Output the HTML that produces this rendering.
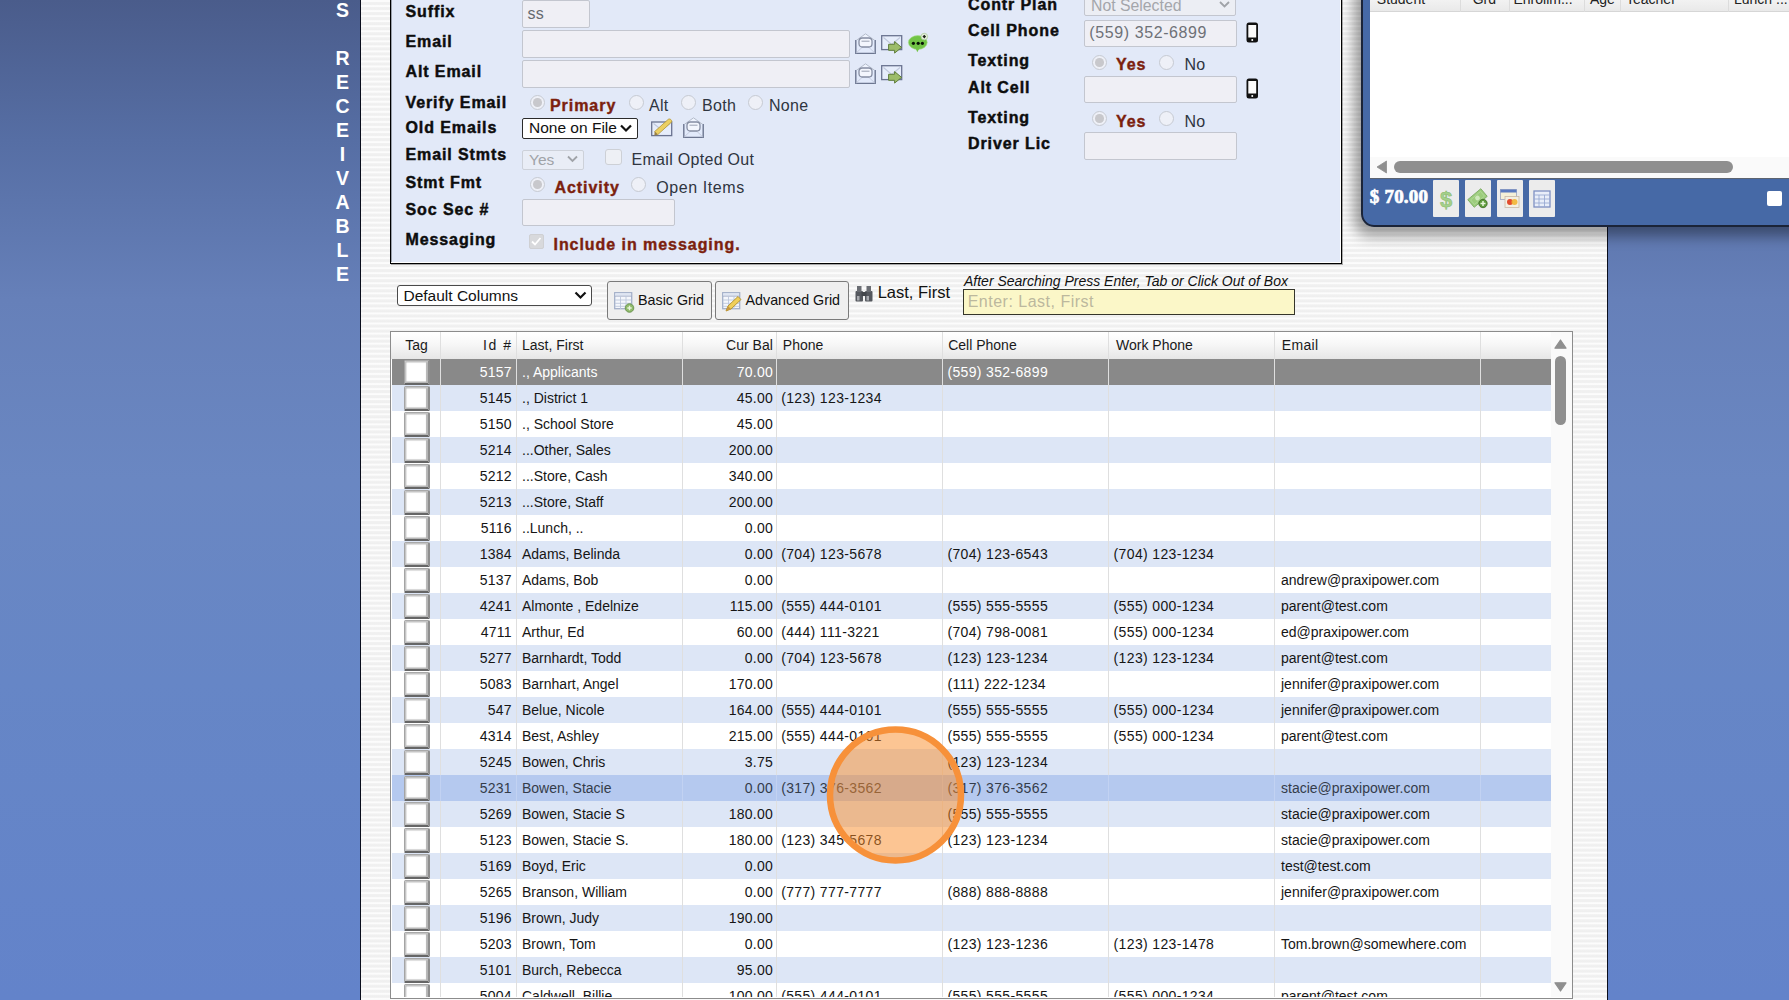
<!DOCTYPE html>
<html><head><meta charset="utf-8"><title>Accounts Receivable</title>
<style>
html,body{margin:0;padding:0;}
body{width:1789px;height:1000px;overflow:hidden;position:relative;font-family:"Liberation Sans", sans-serif;
 background:linear-gradient(180deg,#4a5c8b 0px,#566ea4 140px,#6680b9 300px,#6a87c2 480px,#6686c6 680px,#6383ca 1000px);}
.a{position:absolute;box-sizing:border-box;}
.t{position:absolute;white-space:nowrap;}
.stripes{background:repeating-linear-gradient(180deg,#f6f6f6 0px,#fcfcfc 0.6px,#fcfcfc 1.4px,#f1f1f1 2.4px,#efefef 4.3px,#f6f6f6 5.04px);}
.inp{position:absolute;box-sizing:border-box;background:#efeff5;border:1px solid #c3c6cf;border-radius:2px;}
.radio{position:absolute;box-sizing:border-box;width:15px;height:15px;border-radius:50%;border:1px solid #c6cad2;background:#eef0f7;}
.radio.on::after{content:"";position:absolute;left:2.2px;top:2.2px;width:8.6px;height:8.6px;border-radius:50%;background:#c8c8cc;}
</style></head><body>

<div class="t" style="left:142.50px;width:400px;text-align:center;top:1.09px;font-size:19.5px;line-height:19.5px;font-weight:bold;color:#fff;">S</div>
<div class="t" style="left:142.50px;width:400px;text-align:center;top:48.99px;font-size:19.5px;line-height:19.5px;font-weight:bold;color:#fff;">R</div>
<div class="t" style="left:142.50px;width:400px;text-align:center;top:72.94px;font-size:19.5px;line-height:19.5px;font-weight:bold;color:#fff;">E</div>
<div class="t" style="left:142.50px;width:400px;text-align:center;top:96.89px;font-size:19.5px;line-height:19.5px;font-weight:bold;color:#fff;">C</div>
<div class="t" style="left:142.50px;width:400px;text-align:center;top:120.84px;font-size:19.5px;line-height:19.5px;font-weight:bold;color:#fff;">E</div>
<div class="t" style="left:142.50px;width:400px;text-align:center;top:144.79px;font-size:19.5px;line-height:19.5px;font-weight:bold;color:#fff;">I</div>
<div class="t" style="left:142.50px;width:400px;text-align:center;top:168.74px;font-size:19.5px;line-height:19.5px;font-weight:bold;color:#fff;">V</div>
<div class="t" style="left:142.50px;width:400px;text-align:center;top:192.69px;font-size:19.5px;line-height:19.5px;font-weight:bold;color:#fff;">A</div>
<div class="t" style="left:142.50px;width:400px;text-align:center;top:216.64px;font-size:19.5px;line-height:19.5px;font-weight:bold;color:#fff;">B</div>
<div class="t" style="left:142.50px;width:400px;text-align:center;top:240.59px;font-size:19.5px;line-height:19.5px;font-weight:bold;color:#fff;">L</div>
<div class="t" style="left:142.50px;width:400px;text-align:center;top:264.54px;font-size:19.5px;line-height:19.5px;font-weight:bold;color:#fff;">E</div>
<div class="a" style="left:360px;top:0px;width:1px;height:1000px;background:#0a0e1c;"></div>
<div class="a stripes" style="left:361px;top:0px;width:1246px;height:1000px;"></div>
<div class="a" style="left:1607px;top:0px;width:1px;height:1000px;background:#0a0e1c;"></div>
<div class="a" style="left:390px;top:-10px;width:952px;height:274px;background:#e2e9f8;border:1px solid #000;box-shadow:inset -1px -1px 0 #fff, inset 1px 0 0 #9aa0ab, 1px 1px 0 rgba(0,0,0,0.3);"></div>
<div class="t" style="left:405.50px;top:3.96px;font-size:16px;line-height:16px;font-weight:bold;color:#0d0d0d;letter-spacing:0.9px;-webkit-text-stroke:0.45px #0d0d0d;">Suffix</div>
<div class="t" style="left:405.50px;top:33.96px;font-size:16px;line-height:16px;font-weight:bold;color:#0d0d0d;letter-spacing:0.9px;-webkit-text-stroke:0.45px #0d0d0d;">Email</div>
<div class="t" style="left:405.50px;top:63.96px;font-size:16px;line-height:16px;font-weight:bold;color:#0d0d0d;letter-spacing:0.9px;-webkit-text-stroke:0.45px #0d0d0d;">Alt Email</div>
<div class="t" style="left:405.50px;top:94.96px;font-size:16px;line-height:16px;font-weight:bold;color:#0d0d0d;letter-spacing:0.9px;-webkit-text-stroke:0.45px #0d0d0d;">Verify Email</div>
<div class="t" style="left:405.50px;top:120.46px;font-size:16px;line-height:16px;font-weight:bold;color:#0d0d0d;letter-spacing:0.9px;-webkit-text-stroke:0.45px #0d0d0d;">Old Emails</div>
<div class="t" style="left:405.50px;top:147.16px;font-size:16px;line-height:16px;font-weight:bold;color:#0d0d0d;letter-spacing:0.9px;-webkit-text-stroke:0.45px #0d0d0d;">Email Stmts</div>
<div class="t" style="left:405.50px;top:174.96px;font-size:16px;line-height:16px;font-weight:bold;color:#0d0d0d;letter-spacing:0.9px;-webkit-text-stroke:0.45px #0d0d0d;">Stmt Fmt</div>
<div class="t" style="left:405.50px;top:202.16px;font-size:16px;line-height:16px;font-weight:bold;color:#0d0d0d;letter-spacing:0.9px;-webkit-text-stroke:0.45px #0d0d0d;">Soc Sec #</div>
<div class="t" style="left:405.50px;top:231.96px;font-size:16px;line-height:16px;font-weight:bold;color:#0d0d0d;letter-spacing:0.9px;-webkit-text-stroke:0.45px #0d0d0d;">Messaging</div>
<div class="t" style="left:968.00px;top:-2.64px;font-size:16px;line-height:16px;font-weight:bold;color:#0d0d0d;letter-spacing:0.9px;-webkit-text-stroke:0.45px #0d0d0d;">Contr Plan</div>
<div class="t" style="left:968.00px;top:22.96px;font-size:16px;line-height:16px;font-weight:bold;color:#0d0d0d;letter-spacing:0.9px;-webkit-text-stroke:0.45px #0d0d0d;">Cell Phone</div>
<div class="t" style="left:968.00px;top:52.86px;font-size:16px;line-height:16px;font-weight:bold;color:#0d0d0d;letter-spacing:0.9px;-webkit-text-stroke:0.45px #0d0d0d;">Texting</div>
<div class="t" style="left:968.00px;top:79.86px;font-size:16px;line-height:16px;font-weight:bold;color:#0d0d0d;letter-spacing:0.9px;-webkit-text-stroke:0.45px #0d0d0d;">Alt Cell</div>
<div class="t" style="left:968.00px;top:109.86px;font-size:16px;line-height:16px;font-weight:bold;color:#0d0d0d;letter-spacing:0.9px;-webkit-text-stroke:0.45px #0d0d0d;">Texting</div>
<div class="t" style="left:968.00px;top:135.76px;font-size:16px;line-height:16px;font-weight:bold;color:#0d0d0d;letter-spacing:0.9px;-webkit-text-stroke:0.45px #0d0d0d;">Driver Lic</div>
<div class="inp" style="left:522px;top:0px;width:68px;height:28px;"></div>
<div class="t" style="left:527.50px;top:5.86px;font-size:16px;line-height:16px;color:#666a70;letter-spacing:0.3px;">ss</div>
<div class="inp" style="left:522px;top:30px;width:328px;height:28px;"></div>
<div class="inp" style="left:522px;top:60px;width:328px;height:28px;"></div>
<div class="inp" style="left:522px;top:199px;width:153px;height:27px;"></div>
<div class="inp" style="left:1084px;top:-12px;width:152px;height:28px;background:#eceef4;"></div>
<div class="t" style="left:1091.00px;top:-2.17px;font-size:15.8px;line-height:15.8px;color:#a4a6ab;">Not Selected</div>
<div class="inp" style="left:1084px;top:19.5px;width:153px;height:27.5px;"></div>
<div class="t" style="left:1089.30px;top:24.66px;font-size:16px;line-height:16px;color:#6e7177;letter-spacing:0.6px;">(559) 352-6899</div>
<div class="inp" style="left:1084px;top:76px;width:153px;height:27px;"></div>
<div class="inp" style="left:1084px;top:132px;width:153px;height:27.5px;"></div>
<div class="radio on" style="left:530.0px;top:95.1px;"></div>
<div class="t" style="left:550.00px;top:97.86px;font-size:16px;line-height:16px;font-weight:bold;color:#7c1f0e;letter-spacing:0.95px;-webkit-text-stroke:0.4px #7c1f0e;">Primary</div>
<div class="radio" style="left:628.7px;top:95.1px;"></div>
<div class="t" style="left:649.00px;top:97.86px;font-size:16px;line-height:16px;color:#2f3540;letter-spacing:0.3px;">Alt</div>
<div class="radio" style="left:681.0px;top:95.1px;"></div>
<div class="t" style="left:702.00px;top:97.86px;font-size:16px;line-height:16px;color:#2f3540;letter-spacing:0.3px;">Both</div>
<div class="radio" style="left:747.7px;top:95.1px;"></div>
<div class="t" style="left:769.00px;top:97.86px;font-size:16px;line-height:16px;color:#2f3540;letter-spacing:0.3px;">None</div>
<div class="radio on" style="left:530.0px;top:176.8px;"></div>
<div class="t" style="left:554.40px;top:180.06px;font-size:16px;line-height:16px;font-weight:bold;color:#7c1f0e;letter-spacing:0.95px;-webkit-text-stroke:0.4px #7c1f0e;">Activity</div>
<div class="radio" style="left:630.7px;top:176.8px;"></div>
<div class="t" style="left:656.20px;top:179.86px;font-size:16px;line-height:16px;color:#2f3540;letter-spacing:0.6px;">Open Items</div>
<div class="radio on" style="left:1092.0px;top:54.8px;"></div>
<div class="t" style="left:1116.00px;top:56.56px;font-size:16px;line-height:16px;font-weight:bold;color:#7c1f0e;letter-spacing:0.95px;-webkit-text-stroke:0.4px #7c1f0e;">Yes</div>
<div class="radio" style="left:1158.8px;top:54.8px;"></div>
<div class="t" style="left:1184.50px;top:56.56px;font-size:16px;line-height:16px;color:#2f3540;letter-spacing:0.3px;">No</div>
<div class="radio on" style="left:1092.0px;top:111.0px;"></div>
<div class="t" style="left:1116.00px;top:113.56px;font-size:16px;line-height:16px;font-weight:bold;color:#7c1f0e;letter-spacing:0.95px;-webkit-text-stroke:0.4px #7c1f0e;">Yes</div>
<div class="radio" style="left:1158.8px;top:111.0px;"></div>
<div class="t" style="left:1184.50px;top:113.56px;font-size:16px;line-height:16px;color:#2f3540;letter-spacing:0.3px;">No</div>
<div class="a" style="left:522px;top:118px;width:116px;height:21px;background:#fff;border:1px solid #2b2b2b;border-radius:2px;"></div>
<div class="t" style="left:529.00px;top:120.48px;font-size:15.5px;line-height:15.5px;color:#111;">None on File</div>
<svg class="a" style="left:619px;top:123px;" width="14" height="10" viewBox="0 0 14 10"><path d="M2 2.5 L7 7.5 L12 2.5" fill="none" stroke="#111" stroke-width="2.2"/></svg>
<div class="a" style="left:522px;top:149.5px;width:62px;height:20px;background:#e9edf6;border:1px solid #cdd1d9;border-radius:2px;"></div>
<div class="t" style="left:529.00px;top:151.68px;font-size:15.5px;line-height:15.5px;color:#a0a3a8;">Yes</div>
<svg class="a" style="left:566px;top:154px;" width="13" height="10" viewBox="0 0 13 10"><path d="M2 2.5 L6.5 7 L11 2.5" fill="none" stroke="#a0a3a8" stroke-width="1.8"/></svg>
<svg class="a" style="left:1218px;top:0px;" width="13" height="10" viewBox="0 0 13 10"><path d="M2 2 L6.5 6.5 L11 2" fill="none" stroke="#a0a3a8" stroke-width="1.8"/></svg>
<div class="a" style="left:605px;top:148.5px;width:16.5px;height:16.5px;background:#eef0f5;border:1px solid #cdd0d6;border-radius:3px;"></div>
<div class="t" style="left:631.50px;top:151.66px;font-size:16px;line-height:16px;color:#2f3540;letter-spacing:0.3px;">Email Opted Out</div>
<div class="a" style="left:528.5px;top:234px;width:15px;height:15px;background:#d8d9dc;border:1px solid #cfd0d3;border-radius:2px;"></div>
<svg class="a" style="left:530px;top:236px;" width="12" height="11" viewBox="0 0 12 11"><path d="M2 5.5 L5 8.5 L10.5 2" fill="none" stroke="#fff" stroke-width="1.8"/></svg>
<div class="t" style="left:553.50px;top:237.06px;font-size:16px;line-height:16px;font-weight:bold;color:#7c1f0e;letter-spacing:0.95px;-webkit-text-stroke:0.4px #7c1f0e;">Include in messaging.</div>
<svg class="a" style="left:855px;top:33px;overflow:visible" width="21" height="21" viewBox="0 0 21 21"><path d="M1.2 7.5 L10.5 0.8 L19.8 7.5 Z" fill="#eef3fd" stroke="#b5bdcc" stroke-width="1"/><path d="M0.8 7 L0.8 20.4 L20.2 20.4 L20.2 7" fill="#e2eafb" stroke="#6c7690" stroke-width="1.4"/><path d="M1.2 20 L8.5 13 M19.8 20 L12.5 13" fill="none" stroke="#c3cadb" stroke-width="0.9"/><rect x="4" y="5" width="13" height="9" rx="3.2" fill="#f3f6fd" stroke="#858da2" stroke-width="1.3"/><path d="M6.5 8.2 H14.5" stroke="#8e96aa" stroke-width="0.9"/></svg>
<svg class="a" style="left:881px;top:35px;overflow:visible" width="22" height="20" viewBox="0 0 22 20"><rect x="0.7" y="0.7" width="20" height="13.9" fill="#e6edfb" stroke="#6a7390" stroke-width="1.3"/><path d="M2.5 2.5 L10.7 9.5 L19 2.5" fill="none" stroke="#c0c8dc" stroke-width="1.1"/><path d="M7.6 9.3 L13.6 9.3 L13.6 6.6 L20.6 12.4 L13.6 18.1 L13.6 15.3 L7.6 15.3 Z" fill="#9dbd6b" stroke="#5f7d3b" stroke-width="1" stroke-linejoin="round"/></svg>
<svg class="a" style="left:908px;top:33px;overflow:visible" width="21" height="21" viewBox="0 0 21 21"><ellipse cx="9.8" cy="9.5" rx="9.4" ry="6.9" fill="#72c446" stroke="#a5de86" stroke-width="0.6"/><path d="M7.5 15 L9.3 19.3 L11.6 15 Z" fill="#72c446"/><circle cx="5.4" cy="10.3" r="1.6" fill="#071204"/><circle cx="10.2" cy="10.3" r="1.6" fill="#071204"/><circle cx="14.4" cy="10.3" r="1.6" fill="#071204"/><circle cx="16.3" cy="3.6" r="3.3" fill="#e9f0e0" stroke="#a9c99a" stroke-width="0.8"/><path d="M16.3 1.8 L18.1 3.6 L16.3 5.4 L14.5 3.6 Z" fill="#1b2318"/></svg>
<svg class="a" style="left:855px;top:63px;overflow:visible" width="21" height="21" viewBox="0 0 21 21"><path d="M1.2 7.5 L10.5 0.8 L19.8 7.5 Z" fill="#eef3fd" stroke="#b5bdcc" stroke-width="1"/><path d="M0.8 7 L0.8 20.4 L20.2 20.4 L20.2 7" fill="#e2eafb" stroke="#6c7690" stroke-width="1.4"/><path d="M1.2 20 L8.5 13 M19.8 20 L12.5 13" fill="none" stroke="#c3cadb" stroke-width="0.9"/><rect x="4" y="5" width="13" height="9" rx="3.2" fill="#f3f6fd" stroke="#858da2" stroke-width="1.3"/><path d="M6.5 8.2 H14.5" stroke="#8e96aa" stroke-width="0.9"/></svg>
<svg class="a" style="left:881px;top:65px;overflow:visible" width="22" height="20" viewBox="0 0 22 20"><rect x="0.7" y="0.7" width="20" height="13.9" fill="#e6edfb" stroke="#6a7390" stroke-width="1.3"/><path d="M2.5 2.5 L10.7 9.5 L19 2.5" fill="none" stroke="#c0c8dc" stroke-width="1.1"/><path d="M7.6 9.3 L13.6 9.3 L13.6 6.6 L20.6 12.4 L13.6 18.1 L13.6 15.3 L7.6 15.3 Z" fill="#9dbd6b" stroke="#5f7d3b" stroke-width="1" stroke-linejoin="round"/></svg>
<svg class="a" style="left:651px;top:117.5px;overflow:visible" width="21" height="19" viewBox="0 0 21 19"><rect x="0.7" y="4" width="20" height="13.6" fill="#e6edfb" stroke="#6a7390" stroke-width="1.3"/><path d="M2.5 5.5 L10.7 12 L19 5.5" fill="none" stroke="#c0c8dc" stroke-width="1.1"/><path d="M3.6 13.6 L17.2 1.4 C18.8 0 21.6 2.4 20.4 4.2 L6.8 16.6 Z" fill="#ebcf62" stroke="#b39434" stroke-width="0.8"/><path d="M3.6 13.6 L6.8 16.6 L3.4 17.8 Z" fill="#9a8040"/></svg>
<svg class="a" style="left:683px;top:117px;overflow:visible" width="21" height="21" viewBox="0 0 21 21"><path d="M1.2 7.5 L10.5 0.8 L19.8 7.5 Z" fill="#eef3fd" stroke="#b5bdcc" stroke-width="1"/><path d="M0.8 7 L0.8 20.4 L20.2 20.4 L20.2 7" fill="#e2eafb" stroke="#6c7690" stroke-width="1.4"/><path d="M1.2 20 L8.5 13 M19.8 20 L12.5 13" fill="none" stroke="#c3cadb" stroke-width="0.9"/><rect x="4" y="5" width="13" height="9" rx="3.2" fill="#f3f6fd" stroke="#858da2" stroke-width="1.3"/><path d="M6.5 8.2 H14.5" stroke="#8e96aa" stroke-width="0.9"/></svg>
<svg class="a" style="left:1246px;top:22px;overflow:visible" width="13" height="21" viewBox="0 0 13 21"><rect x="0.5" y="0.5" width="11.5" height="20" rx="2.5" fill="#111"/><rect x="2.3" y="3" width="7.9" height="12.5" fill="#fafafa"/><circle cx="6.25" cy="18" r="1" fill="#fff"/></svg>
<svg class="a" style="left:1246px;top:78px;overflow:visible" width="13" height="21" viewBox="0 0 13 21"><rect x="0.5" y="0.5" width="11.5" height="20" rx="2.5" fill="#111"/><rect x="2.3" y="3" width="7.9" height="12.5" fill="#fafafa"/><circle cx="6.25" cy="18" r="1" fill="#fff"/></svg>
<div class="a" style="left:1361px;top:-20px;width:460px;height:247px;border-radius:0 0 0 13px;box-shadow:-4px 6px 14px 3px rgba(0,0,0,0.38);"></div>
<div class="a" style="left:1361px;top:-20px;width:460px;height:247px;background:#4669a6;border:2px solid #1b2438;border-radius:0 0 0 13px;"></div>
<div class="a" style="left:1370px;top:-20px;width:440px;height:198px;background:#fff;"></div>
<div class="a" style="left:1370px;top:-20px;width:440px;height:32px;background:linear-gradient(180deg,#fbfbfb 0%,#f3f3f3 60%,#e9e9e9 100%);border-bottom:1px solid #d6d6d6;"></div>
<div class="a" style="left:1459.5px;top:-20px;width:1px;height:32px;background:#dcdcdc;"></div>
<div class="a" style="left:1508.5px;top:-20px;width:1px;height:32px;background:#dcdcdc;"></div>
<div class="a" style="left:1584px;top:-20px;width:1px;height:32px;background:#dcdcdc;"></div>
<div class="a" style="left:1620px;top:-20px;width:1px;height:32px;background:#dcdcdc;"></div>
<div class="a" style="left:1728px;top:-20px;width:1px;height:32px;background:#dcdcdc;"></div>
<div class="t" style="left:1376.80px;top:-8.35px;font-size:14px;line-height:14px;color:#222;">Student</div>
<div class="t" style="left:1472.70px;top:-8.35px;font-size:14px;line-height:14px;color:#222;">Grd</div>
<div class="t" style="left:1513.50px;top:-8.35px;font-size:14px;line-height:14px;color:#222;">Enrollm...</div>
<div class="t" style="left:1590.00px;top:-8.35px;font-size:14px;line-height:14px;color:#222;">Age</div>
<div class="t" style="left:1626.00px;top:-8.35px;font-size:14px;line-height:14px;color:#222;">Teacher</div>
<div class="t" style="left:1734.00px;top:-8.35px;font-size:14px;line-height:14px;color:#222;">Lunch ...</div>
<div class="a" style="left:1370px;top:157px;width:440px;height:21px;background:#fafafa;"></div>
<svg class="a" style="left:1377px;top:161px;overflow:visible" width="10" height="12" viewBox="0 0 10 12"><path d="M9.5 0 L9.5 12 L0 6 Z" fill="#8f8f8f" stroke="#8f8f8f" stroke-width="0.8" stroke-linejoin="round"/></svg>
<div class="a" style="left:1393.5px;top:161px;width:339px;height:12px;background:#8f8f8f;border-radius:6px;"></div>
<div class="a" style="left:1370px;top:177.5px;width:440px;height:1.5px;background:#5d6470;"></div>
<div class="t" style="left:1369.80px;top:186.52px;font-size:19px;line-height:19px;font-weight:bold;color:#fff;letter-spacing:0.2px;font-family:'Liberation Serif', serif;-webkit-text-stroke:0.7px #fff;">$ 70.00</div>
<div class="a" style="left:1433px;top:180px;width:26px;height:36.5px;background:#ececec;border-radius:1px;"></div>
<div class="a" style="left:1465px;top:180px;width:26px;height:36.5px;background:#ececec;border-radius:1px;"></div>
<div class="a" style="left:1497px;top:180px;width:26px;height:36.5px;background:#ececec;border-radius:1px;"></div>
<div class="a" style="left:1529px;top:180px;width:26px;height:36.5px;background:#ececec;border-radius:1px;"></div>
<svg class="a" style="left:1439px;top:188px;overflow:visible" width="14" height="22" viewBox="0 0 14 22"><text x="7" y="19" text-anchor="middle" font-family="Liberation Sans" font-weight="bold" font-size="22" fill="#a4d08a" stroke="#86b86c" stroke-width="0.5">$</text></svg>
<svg class="a" style="left:1468px;top:188px;overflow:visible" width="21" height="21" viewBox="0 0 21 21"><g transform="rotate(-40 9.5 10)"><rect x="1" y="5" width="17" height="10" fill="#9ccc7c" stroke="#78a85e" stroke-width="0.8"/><circle cx="9.5" cy="10" r="2.4" fill="#cfe8bc"/><rect x="3" y="7" width="13" height="6" fill="none" stroke="#b9dca3" stroke-width="0.6"/></g><circle cx="15" cy="15.5" r="4.2" fill="#5e9a3c" stroke="#3e6a26" stroke-width="0.8"/><path d="M15 13 V18 M12.5 15.5 H17.5" stroke="#e8f5dc" stroke-width="1.5"/></svg>
<svg class="a" style="left:1500px;top:189px;overflow:visible" width="20" height="20" viewBox="0 0 20 20"><rect x="0.5" y="0.5" width="16" height="10" fill="#f5f0d8" stroke="#9aa4c0" stroke-width="0.8"/><rect x="0.5" y="0.5" width="16" height="3" fill="#5a79c0"/><rect x="5" y="7.5" width="14" height="11" fill="#f4efe2" stroke="#c9b9a6" stroke-width="0.8"/><circle cx="10" cy="13" r="3" fill="#e24b2e"/><circle cx="14.5" cy="13" r="3" fill="#f2b535" opacity="0.9"/></svg>
<svg class="a" style="left:1533px;top:190px;overflow:visible" width="18" height="18" viewBox="0 0 18 18"><rect x="1" y="1" width="16" height="16" fill="#e9eef9" stroke="#7e90c2" stroke-width="1.3"/><path d="M1 5 H17 M1 9 H17 M1 13 H17 M6 5 V17 M11.5 5 V17" stroke="#9aaad2" stroke-width="0.9"/></svg>
<div class="a" style="left:1767px;top:191px;width:15px;height:15px;background:#fff;border-radius:2px;"></div>
<div class="a" style="left:397px;top:285px;width:195px;height:21px;background:#fff;border:1px solid #4a4a4a;border-radius:3px;"></div>
<div class="t" style="left:403.50px;top:287.78px;font-size:15.5px;line-height:15.5px;color:#111;">Default Columns</div>
<svg class="a" style="left:573px;top:290px;overflow:visible" width="15" height="11" viewBox="0 0 15 11"><path d="M2.5 2.5 L7.5 7.5 L12.5 2.5" fill="none" stroke="#111" stroke-width="2.2"/></svg>
<div class="a" style="left:607px;top:281px;width:105px;height:38.5px;background:#efefef;border:1px solid #7a7a7a;border-radius:3px;"></div>
<div class="a" style="left:715px;top:281px;width:134px;height:38.5px;background:#efefef;border:1px solid #7a7a7a;border-radius:3px;"></div>
<svg class="a" style="left:614px;top:292px;overflow:visible" width="21" height="20" viewBox="0 0 21 20"><rect x="0.7" y="0.7" width="17" height="16" fill="#f5f7fc" stroke="#a3afc8" stroke-width="1.3"/><rect x="1.3" y="1.3" width="15.8" height="2.6" fill="#dfe5f2"/><path d="M1 4.2 H17.5" stroke="#9aa6c0" stroke-width="0.8"/><path d="M1 8 H17.5 M1 11.3 H17.5 M1 14.3 H17.5 M6.5 4.2 V17 M12 4.2 V17" stroke="#bcc6db" stroke-width="0.9"/><circle cx="15.5" cy="16" r="4.3" fill="#8fba6a" stroke="#5f8a45" stroke-width="0.8"/><path d="M15.5 13.8 V18.2 M13.3 16 H17.7" stroke="#e9f5dc" stroke-width="1.4"/></svg>
<svg class="a" style="left:722px;top:292px;overflow:visible" width="21" height="20" viewBox="0 0 21 20"><rect x="0.7" y="0.7" width="17" height="16" fill="#f5f7fc" stroke="#a3afc8" stroke-width="1.3"/><rect x="1.3" y="1.3" width="15.8" height="2.6" fill="#dfe5f2"/><path d="M1 4.2 H17.5" stroke="#9aa6c0" stroke-width="0.8"/><path d="M1 8 H17.5 M1 11.3 H17.5 M1 14.3 H17.5 M6.5 4.2 V17 M12 4.2 V17" stroke="#bcc6db" stroke-width="0.9"/><path d="M4 19 L6 14 L16 4.5 L19 7.5 L9 17 Z" fill="#f0cf5a" stroke="#b08f2a" stroke-width="0.9"/><path d="M4 19 L6 14 L9 17 Z" fill="#c9973f"/></svg>
<div class="t" style="left:638.00px;top:292.80px;font-size:14.3px;line-height:14.3px;color:#111;">Basic Grid</div>
<div class="t" style="left:745.50px;top:292.80px;font-size:14.3px;line-height:14.3px;color:#111;">Advanced Grid</div>
<svg class="a" style="left:855px;top:285px;overflow:visible" width="18" height="17" viewBox="0 0 18 17"><rect x="0.5" y="6" width="7.5" height="10.5" rx="1" fill="#55585e"/><rect x="10" y="6" width="7.5" height="10.5" rx="1" fill="#55585e"/><rect x="2" y="1" width="4.5" height="6" fill="#6a6d73"/><rect x="11.5" y="1" width="4.5" height="6" fill="#6a6d73"/><rect x="6.5" y="7" width="5" height="4" fill="#44474c"/><rect x="2" y="11" width="2.5" height="4.5" fill="#a9abb0"/><rect x="11.5" y="11" width="2.5" height="4.5" fill="#a9abb0"/></svg>
<div class="t" style="left:877.70px;top:283.73px;font-size:16.5px;line-height:16.5px;color:#111;">Last, First</div>
<div class="t" style="left:964.00px;top:273.80px;font-size:14px;line-height:14px;font-style:italic;color:#111;">After Searching Press Enter, Tab or Click Out of Box</div>
<div class="a" style="left:963px;top:289px;width:332px;height:25.5px;background:#fbf7c8;border:1.5px solid #35352a;"></div>
<div class="t" style="left:967.70px;top:294.06px;font-size:16px;line-height:16px;color:#bcb89e;letter-spacing:0.5px;">Enter: Last, First</div>
<div class="a" style="left:390px;top:331px;width:1183px;height:668px;background:#fff;border:1px solid #8c8c8c;"></div>
<div class="a" style="left:391px;top:332px;width:1181px;height:665px;overflow:hidden;"><div class="a" style="left:-391px;top:-332px;width:1789px;height:1000px;">
<div class="a" style="left:391px;top:332px;width:1160px;height:27px;background:linear-gradient(180deg,#ffffff 0%,#f7f7f7 45%,#e6e6e6 100%);"></div>
<div class="a" style="left:392px;top:359px;width:1159px;height:26px;background:#898989;"></div>
<div class="t" style="left:111.80px;width:400px;text-align:right;top:365.35px;font-size:14px;line-height:14px;color:#fff;letter-spacing:0.25px;">5157</div>
<div class="t" style="left:522.00px;top:365.35px;font-size:14px;line-height:14px;color:#fff;">., Applicants</div>
<div class="t" style="left:373.00px;width:400px;text-align:right;top:365.35px;font-size:14px;line-height:14px;color:#fff;letter-spacing:0.25px;">70.00</div>
<div class="t" style="left:781.20px;top:365.35px;font-size:14px;line-height:14px;color:#fff;letter-spacing:0.35px;"></div>
<div class="t" style="left:947.40px;top:365.35px;font-size:14px;line-height:14px;color:#fff;letter-spacing:0.35px;">(559) 352-6899</div>
<div class="t" style="left:1113.60px;top:365.35px;font-size:14px;line-height:14px;color:#fff;letter-spacing:0.35px;"></div>
<div class="t" style="left:1281.00px;top:365.35px;font-size:14px;line-height:14px;color:#fff;"></div>
<div class="a" style="left:404px;top:360.3px;width:26px;height:24.5px;background:#fff;border-style:solid;border-width:1.6px 2px 2.4px 1.6px;border-color:#a9a9a9 #8e8e8e #666666 #a4a4a4;border-radius:1.5px;box-shadow:inset 1.4px 1.4px 0.8px #c2c2c2, inset -2px -1.6px 0.8px #b4b4b4;"></div>
<div class="a" style="left:392px;top:385px;width:1159px;height:26px;background:#dde6f6;"></div>
<div class="t" style="left:111.80px;width:400px;text-align:right;top:391.35px;font-size:14px;line-height:14px;color:#151515;letter-spacing:0.25px;">5145</div>
<div class="t" style="left:522.00px;top:391.35px;font-size:14px;line-height:14px;color:#151515;">., District 1</div>
<div class="t" style="left:373.00px;width:400px;text-align:right;top:391.35px;font-size:14px;line-height:14px;color:#151515;letter-spacing:0.25px;">45.00</div>
<div class="t" style="left:781.20px;top:391.35px;font-size:14px;line-height:14px;color:#151515;letter-spacing:0.35px;">(123) 123-1234</div>
<div class="t" style="left:947.40px;top:391.35px;font-size:14px;line-height:14px;color:#151515;letter-spacing:0.35px;"></div>
<div class="t" style="left:1113.60px;top:391.35px;font-size:14px;line-height:14px;color:#151515;letter-spacing:0.35px;"></div>
<div class="t" style="left:1281.00px;top:391.35px;font-size:14px;line-height:14px;color:#151515;"></div>
<div class="a" style="left:404px;top:386.3px;width:26px;height:24.5px;background:#fff;border-style:solid;border-width:1.6px 2px 2.4px 1.6px;border-color:#a9a9a9 #8e8e8e #666666 #a4a4a4;border-radius:1.5px;box-shadow:inset 1.4px 1.4px 0.8px #c2c2c2, inset -2px -1.6px 0.8px #b4b4b4;"></div>
<div class="a" style="left:392px;top:411px;width:1159px;height:26px;background:#ffffff;"></div>
<div class="t" style="left:111.80px;width:400px;text-align:right;top:417.35px;font-size:14px;line-height:14px;color:#151515;letter-spacing:0.25px;">5150</div>
<div class="t" style="left:522.00px;top:417.35px;font-size:14px;line-height:14px;color:#151515;">., School Store</div>
<div class="t" style="left:373.00px;width:400px;text-align:right;top:417.35px;font-size:14px;line-height:14px;color:#151515;letter-spacing:0.25px;">45.00</div>
<div class="t" style="left:781.20px;top:417.35px;font-size:14px;line-height:14px;color:#151515;letter-spacing:0.35px;"></div>
<div class="t" style="left:947.40px;top:417.35px;font-size:14px;line-height:14px;color:#151515;letter-spacing:0.35px;"></div>
<div class="t" style="left:1113.60px;top:417.35px;font-size:14px;line-height:14px;color:#151515;letter-spacing:0.35px;"></div>
<div class="t" style="left:1281.00px;top:417.35px;font-size:14px;line-height:14px;color:#151515;"></div>
<div class="a" style="left:404px;top:412.3px;width:26px;height:24.5px;background:#fff;border-style:solid;border-width:1.6px 2px 2.4px 1.6px;border-color:#a9a9a9 #8e8e8e #666666 #a4a4a4;border-radius:1.5px;box-shadow:inset 1.4px 1.4px 0.8px #c2c2c2, inset -2px -1.6px 0.8px #b4b4b4;"></div>
<div class="a" style="left:392px;top:437px;width:1159px;height:26px;background:#dde6f6;"></div>
<div class="t" style="left:111.80px;width:400px;text-align:right;top:443.35px;font-size:14px;line-height:14px;color:#151515;letter-spacing:0.25px;">5214</div>
<div class="t" style="left:522.00px;top:443.35px;font-size:14px;line-height:14px;color:#151515;">...Other, Sales</div>
<div class="t" style="left:373.00px;width:400px;text-align:right;top:443.35px;font-size:14px;line-height:14px;color:#151515;letter-spacing:0.25px;">200.00</div>
<div class="t" style="left:781.20px;top:443.35px;font-size:14px;line-height:14px;color:#151515;letter-spacing:0.35px;"></div>
<div class="t" style="left:947.40px;top:443.35px;font-size:14px;line-height:14px;color:#151515;letter-spacing:0.35px;"></div>
<div class="t" style="left:1113.60px;top:443.35px;font-size:14px;line-height:14px;color:#151515;letter-spacing:0.35px;"></div>
<div class="t" style="left:1281.00px;top:443.35px;font-size:14px;line-height:14px;color:#151515;"></div>
<div class="a" style="left:404px;top:438.3px;width:26px;height:24.5px;background:#fff;border-style:solid;border-width:1.6px 2px 2.4px 1.6px;border-color:#a9a9a9 #8e8e8e #666666 #a4a4a4;border-radius:1.5px;box-shadow:inset 1.4px 1.4px 0.8px #c2c2c2, inset -2px -1.6px 0.8px #b4b4b4;"></div>
<div class="a" style="left:392px;top:463px;width:1159px;height:26px;background:#ffffff;"></div>
<div class="t" style="left:111.80px;width:400px;text-align:right;top:469.35px;font-size:14px;line-height:14px;color:#151515;letter-spacing:0.25px;">5212</div>
<div class="t" style="left:522.00px;top:469.35px;font-size:14px;line-height:14px;color:#151515;">...Store, Cash</div>
<div class="t" style="left:373.00px;width:400px;text-align:right;top:469.35px;font-size:14px;line-height:14px;color:#151515;letter-spacing:0.25px;">340.00</div>
<div class="t" style="left:781.20px;top:469.35px;font-size:14px;line-height:14px;color:#151515;letter-spacing:0.35px;"></div>
<div class="t" style="left:947.40px;top:469.35px;font-size:14px;line-height:14px;color:#151515;letter-spacing:0.35px;"></div>
<div class="t" style="left:1113.60px;top:469.35px;font-size:14px;line-height:14px;color:#151515;letter-spacing:0.35px;"></div>
<div class="t" style="left:1281.00px;top:469.35px;font-size:14px;line-height:14px;color:#151515;"></div>
<div class="a" style="left:404px;top:464.3px;width:26px;height:24.5px;background:#fff;border-style:solid;border-width:1.6px 2px 2.4px 1.6px;border-color:#a9a9a9 #8e8e8e #666666 #a4a4a4;border-radius:1.5px;box-shadow:inset 1.4px 1.4px 0.8px #c2c2c2, inset -2px -1.6px 0.8px #b4b4b4;"></div>
<div class="a" style="left:392px;top:489px;width:1159px;height:26px;background:#dde6f6;"></div>
<div class="t" style="left:111.80px;width:400px;text-align:right;top:495.35px;font-size:14px;line-height:14px;color:#151515;letter-spacing:0.25px;">5213</div>
<div class="t" style="left:522.00px;top:495.35px;font-size:14px;line-height:14px;color:#151515;">...Store, Staff</div>
<div class="t" style="left:373.00px;width:400px;text-align:right;top:495.35px;font-size:14px;line-height:14px;color:#151515;letter-spacing:0.25px;">200.00</div>
<div class="t" style="left:781.20px;top:495.35px;font-size:14px;line-height:14px;color:#151515;letter-spacing:0.35px;"></div>
<div class="t" style="left:947.40px;top:495.35px;font-size:14px;line-height:14px;color:#151515;letter-spacing:0.35px;"></div>
<div class="t" style="left:1113.60px;top:495.35px;font-size:14px;line-height:14px;color:#151515;letter-spacing:0.35px;"></div>
<div class="t" style="left:1281.00px;top:495.35px;font-size:14px;line-height:14px;color:#151515;"></div>
<div class="a" style="left:404px;top:490.3px;width:26px;height:24.5px;background:#fff;border-style:solid;border-width:1.6px 2px 2.4px 1.6px;border-color:#a9a9a9 #8e8e8e #666666 #a4a4a4;border-radius:1.5px;box-shadow:inset 1.4px 1.4px 0.8px #c2c2c2, inset -2px -1.6px 0.8px #b4b4b4;"></div>
<div class="a" style="left:392px;top:515px;width:1159px;height:26px;background:#ffffff;"></div>
<div class="t" style="left:111.80px;width:400px;text-align:right;top:521.35px;font-size:14px;line-height:14px;color:#151515;letter-spacing:0.25px;">5116</div>
<div class="t" style="left:522.00px;top:521.35px;font-size:14px;line-height:14px;color:#151515;">..Lunch, ..</div>
<div class="t" style="left:373.00px;width:400px;text-align:right;top:521.35px;font-size:14px;line-height:14px;color:#151515;letter-spacing:0.25px;">0.00</div>
<div class="t" style="left:781.20px;top:521.35px;font-size:14px;line-height:14px;color:#151515;letter-spacing:0.35px;"></div>
<div class="t" style="left:947.40px;top:521.35px;font-size:14px;line-height:14px;color:#151515;letter-spacing:0.35px;"></div>
<div class="t" style="left:1113.60px;top:521.35px;font-size:14px;line-height:14px;color:#151515;letter-spacing:0.35px;"></div>
<div class="t" style="left:1281.00px;top:521.35px;font-size:14px;line-height:14px;color:#151515;"></div>
<div class="a" style="left:404px;top:516.3px;width:26px;height:24.5px;background:#fff;border-style:solid;border-width:1.6px 2px 2.4px 1.6px;border-color:#a9a9a9 #8e8e8e #666666 #a4a4a4;border-radius:1.5px;box-shadow:inset 1.4px 1.4px 0.8px #c2c2c2, inset -2px -1.6px 0.8px #b4b4b4;"></div>
<div class="a" style="left:392px;top:541px;width:1159px;height:26px;background:#dde6f6;"></div>
<div class="t" style="left:111.80px;width:400px;text-align:right;top:547.35px;font-size:14px;line-height:14px;color:#151515;letter-spacing:0.25px;">1384</div>
<div class="t" style="left:522.00px;top:547.35px;font-size:14px;line-height:14px;color:#151515;">Adams, Belinda</div>
<div class="t" style="left:373.00px;width:400px;text-align:right;top:547.35px;font-size:14px;line-height:14px;color:#151515;letter-spacing:0.25px;">0.00</div>
<div class="t" style="left:781.20px;top:547.35px;font-size:14px;line-height:14px;color:#151515;letter-spacing:0.35px;">(704) 123-5678</div>
<div class="t" style="left:947.40px;top:547.35px;font-size:14px;line-height:14px;color:#151515;letter-spacing:0.35px;">(704) 123-6543</div>
<div class="t" style="left:1113.60px;top:547.35px;font-size:14px;line-height:14px;color:#151515;letter-spacing:0.35px;">(704) 123-1234</div>
<div class="t" style="left:1281.00px;top:547.35px;font-size:14px;line-height:14px;color:#151515;"></div>
<div class="a" style="left:404px;top:542.3px;width:26px;height:24.5px;background:#fff;border-style:solid;border-width:1.6px 2px 2.4px 1.6px;border-color:#a9a9a9 #8e8e8e #666666 #a4a4a4;border-radius:1.5px;box-shadow:inset 1.4px 1.4px 0.8px #c2c2c2, inset -2px -1.6px 0.8px #b4b4b4;"></div>
<div class="a" style="left:392px;top:567px;width:1159px;height:26px;background:#ffffff;"></div>
<div class="t" style="left:111.80px;width:400px;text-align:right;top:573.35px;font-size:14px;line-height:14px;color:#151515;letter-spacing:0.25px;">5137</div>
<div class="t" style="left:522.00px;top:573.35px;font-size:14px;line-height:14px;color:#151515;">Adams, Bob</div>
<div class="t" style="left:373.00px;width:400px;text-align:right;top:573.35px;font-size:14px;line-height:14px;color:#151515;letter-spacing:0.25px;">0.00</div>
<div class="t" style="left:781.20px;top:573.35px;font-size:14px;line-height:14px;color:#151515;letter-spacing:0.35px;"></div>
<div class="t" style="left:947.40px;top:573.35px;font-size:14px;line-height:14px;color:#151515;letter-spacing:0.35px;"></div>
<div class="t" style="left:1113.60px;top:573.35px;font-size:14px;line-height:14px;color:#151515;letter-spacing:0.35px;"></div>
<div class="t" style="left:1281.00px;top:573.35px;font-size:14px;line-height:14px;color:#151515;">andrew@praxipower.com</div>
<div class="a" style="left:404px;top:568.3px;width:26px;height:24.5px;background:#fff;border-style:solid;border-width:1.6px 2px 2.4px 1.6px;border-color:#a9a9a9 #8e8e8e #666666 #a4a4a4;border-radius:1.5px;box-shadow:inset 1.4px 1.4px 0.8px #c2c2c2, inset -2px -1.6px 0.8px #b4b4b4;"></div>
<div class="a" style="left:392px;top:593px;width:1159px;height:26px;background:#dde6f6;"></div>
<div class="t" style="left:111.80px;width:400px;text-align:right;top:599.35px;font-size:14px;line-height:14px;color:#151515;letter-spacing:0.25px;">4241</div>
<div class="t" style="left:522.00px;top:599.35px;font-size:14px;line-height:14px;color:#151515;">Almonte , Edelnize</div>
<div class="t" style="left:373.00px;width:400px;text-align:right;top:599.35px;font-size:14px;line-height:14px;color:#151515;letter-spacing:0.25px;">115.00</div>
<div class="t" style="left:781.20px;top:599.35px;font-size:14px;line-height:14px;color:#151515;letter-spacing:0.35px;">(555) 444-0101</div>
<div class="t" style="left:947.40px;top:599.35px;font-size:14px;line-height:14px;color:#151515;letter-spacing:0.35px;">(555) 555-5555</div>
<div class="t" style="left:1113.60px;top:599.35px;font-size:14px;line-height:14px;color:#151515;letter-spacing:0.35px;">(555) 000-1234</div>
<div class="t" style="left:1281.00px;top:599.35px;font-size:14px;line-height:14px;color:#151515;">parent@test.com</div>
<div class="a" style="left:404px;top:594.3px;width:26px;height:24.5px;background:#fff;border-style:solid;border-width:1.6px 2px 2.4px 1.6px;border-color:#a9a9a9 #8e8e8e #666666 #a4a4a4;border-radius:1.5px;box-shadow:inset 1.4px 1.4px 0.8px #c2c2c2, inset -2px -1.6px 0.8px #b4b4b4;"></div>
<div class="a" style="left:392px;top:619px;width:1159px;height:26px;background:#ffffff;"></div>
<div class="t" style="left:111.80px;width:400px;text-align:right;top:625.35px;font-size:14px;line-height:14px;color:#151515;letter-spacing:0.25px;">4711</div>
<div class="t" style="left:522.00px;top:625.35px;font-size:14px;line-height:14px;color:#151515;">Arthur, Ed</div>
<div class="t" style="left:373.00px;width:400px;text-align:right;top:625.35px;font-size:14px;line-height:14px;color:#151515;letter-spacing:0.25px;">60.00</div>
<div class="t" style="left:781.20px;top:625.35px;font-size:14px;line-height:14px;color:#151515;letter-spacing:0.35px;">(444) 111-3221</div>
<div class="t" style="left:947.40px;top:625.35px;font-size:14px;line-height:14px;color:#151515;letter-spacing:0.35px;">(704) 798-0081</div>
<div class="t" style="left:1113.60px;top:625.35px;font-size:14px;line-height:14px;color:#151515;letter-spacing:0.35px;">(555) 000-1234</div>
<div class="t" style="left:1281.00px;top:625.35px;font-size:14px;line-height:14px;color:#151515;">ed@praxipower.com</div>
<div class="a" style="left:404px;top:620.3px;width:26px;height:24.5px;background:#fff;border-style:solid;border-width:1.6px 2px 2.4px 1.6px;border-color:#a9a9a9 #8e8e8e #666666 #a4a4a4;border-radius:1.5px;box-shadow:inset 1.4px 1.4px 0.8px #c2c2c2, inset -2px -1.6px 0.8px #b4b4b4;"></div>
<div class="a" style="left:392px;top:645px;width:1159px;height:26px;background:#dde6f6;"></div>
<div class="t" style="left:111.80px;width:400px;text-align:right;top:651.35px;font-size:14px;line-height:14px;color:#151515;letter-spacing:0.25px;">5277</div>
<div class="t" style="left:522.00px;top:651.35px;font-size:14px;line-height:14px;color:#151515;">Barnhardt, Todd</div>
<div class="t" style="left:373.00px;width:400px;text-align:right;top:651.35px;font-size:14px;line-height:14px;color:#151515;letter-spacing:0.25px;">0.00</div>
<div class="t" style="left:781.20px;top:651.35px;font-size:14px;line-height:14px;color:#151515;letter-spacing:0.35px;">(704) 123-5678</div>
<div class="t" style="left:947.40px;top:651.35px;font-size:14px;line-height:14px;color:#151515;letter-spacing:0.35px;">(123) 123-1234</div>
<div class="t" style="left:1113.60px;top:651.35px;font-size:14px;line-height:14px;color:#151515;letter-spacing:0.35px;">(123) 123-1234</div>
<div class="t" style="left:1281.00px;top:651.35px;font-size:14px;line-height:14px;color:#151515;">parent@test.com</div>
<div class="a" style="left:404px;top:646.3px;width:26px;height:24.5px;background:#fff;border-style:solid;border-width:1.6px 2px 2.4px 1.6px;border-color:#a9a9a9 #8e8e8e #666666 #a4a4a4;border-radius:1.5px;box-shadow:inset 1.4px 1.4px 0.8px #c2c2c2, inset -2px -1.6px 0.8px #b4b4b4;"></div>
<div class="a" style="left:392px;top:671px;width:1159px;height:26px;background:#ffffff;"></div>
<div class="t" style="left:111.80px;width:400px;text-align:right;top:677.35px;font-size:14px;line-height:14px;color:#151515;letter-spacing:0.25px;">5083</div>
<div class="t" style="left:522.00px;top:677.35px;font-size:14px;line-height:14px;color:#151515;">Barnhart, Angel</div>
<div class="t" style="left:373.00px;width:400px;text-align:right;top:677.35px;font-size:14px;line-height:14px;color:#151515;letter-spacing:0.25px;">170.00</div>
<div class="t" style="left:781.20px;top:677.35px;font-size:14px;line-height:14px;color:#151515;letter-spacing:0.35px;"></div>
<div class="t" style="left:947.40px;top:677.35px;font-size:14px;line-height:14px;color:#151515;letter-spacing:0.35px;">(111) 222-1234</div>
<div class="t" style="left:1113.60px;top:677.35px;font-size:14px;line-height:14px;color:#151515;letter-spacing:0.35px;"></div>
<div class="t" style="left:1281.00px;top:677.35px;font-size:14px;line-height:14px;color:#151515;">jennifer@praxipower.com</div>
<div class="a" style="left:404px;top:672.3px;width:26px;height:24.5px;background:#fff;border-style:solid;border-width:1.6px 2px 2.4px 1.6px;border-color:#a9a9a9 #8e8e8e #666666 #a4a4a4;border-radius:1.5px;box-shadow:inset 1.4px 1.4px 0.8px #c2c2c2, inset -2px -1.6px 0.8px #b4b4b4;"></div>
<div class="a" style="left:392px;top:697px;width:1159px;height:26px;background:#dde6f6;"></div>
<div class="t" style="left:111.80px;width:400px;text-align:right;top:703.35px;font-size:14px;line-height:14px;color:#151515;letter-spacing:0.25px;">547</div>
<div class="t" style="left:522.00px;top:703.35px;font-size:14px;line-height:14px;color:#151515;">Belue, Nicole</div>
<div class="t" style="left:373.00px;width:400px;text-align:right;top:703.35px;font-size:14px;line-height:14px;color:#151515;letter-spacing:0.25px;">164.00</div>
<div class="t" style="left:781.20px;top:703.35px;font-size:14px;line-height:14px;color:#151515;letter-spacing:0.35px;">(555) 444-0101</div>
<div class="t" style="left:947.40px;top:703.35px;font-size:14px;line-height:14px;color:#151515;letter-spacing:0.35px;">(555) 555-5555</div>
<div class="t" style="left:1113.60px;top:703.35px;font-size:14px;line-height:14px;color:#151515;letter-spacing:0.35px;">(555) 000-1234</div>
<div class="t" style="left:1281.00px;top:703.35px;font-size:14px;line-height:14px;color:#151515;">jennifer@praxipower.com</div>
<div class="a" style="left:404px;top:698.3px;width:26px;height:24.5px;background:#fff;border-style:solid;border-width:1.6px 2px 2.4px 1.6px;border-color:#a9a9a9 #8e8e8e #666666 #a4a4a4;border-radius:1.5px;box-shadow:inset 1.4px 1.4px 0.8px #c2c2c2, inset -2px -1.6px 0.8px #b4b4b4;"></div>
<div class="a" style="left:392px;top:723px;width:1159px;height:26px;background:#ffffff;"></div>
<div class="t" style="left:111.80px;width:400px;text-align:right;top:729.35px;font-size:14px;line-height:14px;color:#151515;letter-spacing:0.25px;">4314</div>
<div class="t" style="left:522.00px;top:729.35px;font-size:14px;line-height:14px;color:#151515;">Best, Ashley</div>
<div class="t" style="left:373.00px;width:400px;text-align:right;top:729.35px;font-size:14px;line-height:14px;color:#151515;letter-spacing:0.25px;">215.00</div>
<div class="t" style="left:781.20px;top:729.35px;font-size:14px;line-height:14px;color:#151515;letter-spacing:0.35px;">(555) 444-0101</div>
<div class="t" style="left:947.40px;top:729.35px;font-size:14px;line-height:14px;color:#151515;letter-spacing:0.35px;">(555) 555-5555</div>
<div class="t" style="left:1113.60px;top:729.35px;font-size:14px;line-height:14px;color:#151515;letter-spacing:0.35px;">(555) 000-1234</div>
<div class="t" style="left:1281.00px;top:729.35px;font-size:14px;line-height:14px;color:#151515;">parent@test.com</div>
<div class="a" style="left:404px;top:724.3px;width:26px;height:24.5px;background:#fff;border-style:solid;border-width:1.6px 2px 2.4px 1.6px;border-color:#a9a9a9 #8e8e8e #666666 #a4a4a4;border-radius:1.5px;box-shadow:inset 1.4px 1.4px 0.8px #c2c2c2, inset -2px -1.6px 0.8px #b4b4b4;"></div>
<div class="a" style="left:392px;top:749px;width:1159px;height:26px;background:#dde6f6;"></div>
<div class="t" style="left:111.80px;width:400px;text-align:right;top:755.35px;font-size:14px;line-height:14px;color:#151515;letter-spacing:0.25px;">5245</div>
<div class="t" style="left:522.00px;top:755.35px;font-size:14px;line-height:14px;color:#151515;">Bowen, Chris</div>
<div class="t" style="left:373.00px;width:400px;text-align:right;top:755.35px;font-size:14px;line-height:14px;color:#151515;letter-spacing:0.25px;">3.75</div>
<div class="t" style="left:781.20px;top:755.35px;font-size:14px;line-height:14px;color:#151515;letter-spacing:0.35px;"></div>
<div class="t" style="left:947.40px;top:755.35px;font-size:14px;line-height:14px;color:#151515;letter-spacing:0.35px;">(123) 123-1234</div>
<div class="t" style="left:1113.60px;top:755.35px;font-size:14px;line-height:14px;color:#151515;letter-spacing:0.35px;"></div>
<div class="t" style="left:1281.00px;top:755.35px;font-size:14px;line-height:14px;color:#151515;"></div>
<div class="a" style="left:404px;top:750.3px;width:26px;height:24.5px;background:#fff;border-style:solid;border-width:1.6px 2px 2.4px 1.6px;border-color:#a9a9a9 #8e8e8e #666666 #a4a4a4;border-radius:1.5px;box-shadow:inset 1.4px 1.4px 0.8px #c2c2c2, inset -2px -1.6px 0.8px #b4b4b4;"></div>
<div class="a" style="left:392px;top:775px;width:1159px;height:26px;background:#b5c9ef;"></div>
<div class="t" style="left:111.80px;width:400px;text-align:right;top:781.35px;font-size:14px;line-height:14px;color:#343c4a;letter-spacing:0.25px;">5231</div>
<div class="t" style="left:522.00px;top:781.35px;font-size:14px;line-height:14px;color:#343c4a;">Bowen, Stacie</div>
<div class="t" style="left:373.00px;width:400px;text-align:right;top:781.35px;font-size:14px;line-height:14px;color:#343c4a;letter-spacing:0.25px;">0.00</div>
<div class="t" style="left:781.20px;top:781.35px;font-size:14px;line-height:14px;color:#343c4a;letter-spacing:0.35px;">(317) 376-3562</div>
<div class="t" style="left:947.40px;top:781.35px;font-size:14px;line-height:14px;color:#343c4a;letter-spacing:0.35px;">(317) 376-3562</div>
<div class="t" style="left:1113.60px;top:781.35px;font-size:14px;line-height:14px;color:#343c4a;letter-spacing:0.35px;"></div>
<div class="t" style="left:1281.00px;top:781.35px;font-size:14px;line-height:14px;color:#343c4a;">stacie@praxipower.com</div>
<div class="a" style="left:404px;top:776.3px;width:26px;height:24.5px;background:#fff;border-style:solid;border-width:1.6px 2px 2.4px 1.6px;border-color:#a9a9a9 #8e8e8e #666666 #a4a4a4;border-radius:1.5px;box-shadow:inset 1.4px 1.4px 0.8px #c2c2c2, inset -2px -1.6px 0.8px #b4b4b4;"></div>
<div class="a" style="left:392px;top:801px;width:1159px;height:26px;background:#dde6f6;"></div>
<div class="t" style="left:111.80px;width:400px;text-align:right;top:807.35px;font-size:14px;line-height:14px;color:#151515;letter-spacing:0.25px;">5269</div>
<div class="t" style="left:522.00px;top:807.35px;font-size:14px;line-height:14px;color:#151515;">Bowen, Stacie S</div>
<div class="t" style="left:373.00px;width:400px;text-align:right;top:807.35px;font-size:14px;line-height:14px;color:#151515;letter-spacing:0.25px;">180.00</div>
<div class="t" style="left:781.20px;top:807.35px;font-size:14px;line-height:14px;color:#151515;letter-spacing:0.35px;"></div>
<div class="t" style="left:947.40px;top:807.35px;font-size:14px;line-height:14px;color:#151515;letter-spacing:0.35px;">(555) 555-5555</div>
<div class="t" style="left:1113.60px;top:807.35px;font-size:14px;line-height:14px;color:#151515;letter-spacing:0.35px;"></div>
<div class="t" style="left:1281.00px;top:807.35px;font-size:14px;line-height:14px;color:#151515;">stacie@praxipower.com</div>
<div class="a" style="left:404px;top:802.3px;width:26px;height:24.5px;background:#fff;border-style:solid;border-width:1.6px 2px 2.4px 1.6px;border-color:#a9a9a9 #8e8e8e #666666 #a4a4a4;border-radius:1.5px;box-shadow:inset 1.4px 1.4px 0.8px #c2c2c2, inset -2px -1.6px 0.8px #b4b4b4;"></div>
<div class="a" style="left:392px;top:827px;width:1159px;height:26px;background:#ffffff;"></div>
<div class="t" style="left:111.80px;width:400px;text-align:right;top:833.35px;font-size:14px;line-height:14px;color:#151515;letter-spacing:0.25px;">5123</div>
<div class="t" style="left:522.00px;top:833.35px;font-size:14px;line-height:14px;color:#151515;">Bowen, Stacie S.</div>
<div class="t" style="left:373.00px;width:400px;text-align:right;top:833.35px;font-size:14px;line-height:14px;color:#151515;letter-spacing:0.25px;">180.00</div>
<div class="t" style="left:781.20px;top:833.35px;font-size:14px;line-height:14px;color:#151515;letter-spacing:0.35px;">(123) 345-5678</div>
<div class="t" style="left:947.40px;top:833.35px;font-size:14px;line-height:14px;color:#151515;letter-spacing:0.35px;">(123) 123-1234</div>
<div class="t" style="left:1113.60px;top:833.35px;font-size:14px;line-height:14px;color:#151515;letter-spacing:0.35px;"></div>
<div class="t" style="left:1281.00px;top:833.35px;font-size:14px;line-height:14px;color:#151515;">stacie@praxipower.com</div>
<div class="a" style="left:404px;top:828.3px;width:26px;height:24.5px;background:#fff;border-style:solid;border-width:1.6px 2px 2.4px 1.6px;border-color:#a9a9a9 #8e8e8e #666666 #a4a4a4;border-radius:1.5px;box-shadow:inset 1.4px 1.4px 0.8px #c2c2c2, inset -2px -1.6px 0.8px #b4b4b4;"></div>
<div class="a" style="left:392px;top:853px;width:1159px;height:26px;background:#dde6f6;"></div>
<div class="t" style="left:111.80px;width:400px;text-align:right;top:859.35px;font-size:14px;line-height:14px;color:#151515;letter-spacing:0.25px;">5169</div>
<div class="t" style="left:522.00px;top:859.35px;font-size:14px;line-height:14px;color:#151515;">Boyd, Eric</div>
<div class="t" style="left:373.00px;width:400px;text-align:right;top:859.35px;font-size:14px;line-height:14px;color:#151515;letter-spacing:0.25px;">0.00</div>
<div class="t" style="left:781.20px;top:859.35px;font-size:14px;line-height:14px;color:#151515;letter-spacing:0.35px;"></div>
<div class="t" style="left:947.40px;top:859.35px;font-size:14px;line-height:14px;color:#151515;letter-spacing:0.35px;"></div>
<div class="t" style="left:1113.60px;top:859.35px;font-size:14px;line-height:14px;color:#151515;letter-spacing:0.35px;"></div>
<div class="t" style="left:1281.00px;top:859.35px;font-size:14px;line-height:14px;color:#151515;">test@test.com</div>
<div class="a" style="left:404px;top:854.3px;width:26px;height:24.5px;background:#fff;border-style:solid;border-width:1.6px 2px 2.4px 1.6px;border-color:#a9a9a9 #8e8e8e #666666 #a4a4a4;border-radius:1.5px;box-shadow:inset 1.4px 1.4px 0.8px #c2c2c2, inset -2px -1.6px 0.8px #b4b4b4;"></div>
<div class="a" style="left:392px;top:879px;width:1159px;height:26px;background:#ffffff;"></div>
<div class="t" style="left:111.80px;width:400px;text-align:right;top:885.35px;font-size:14px;line-height:14px;color:#151515;letter-spacing:0.25px;">5265</div>
<div class="t" style="left:522.00px;top:885.35px;font-size:14px;line-height:14px;color:#151515;">Branson, William</div>
<div class="t" style="left:373.00px;width:400px;text-align:right;top:885.35px;font-size:14px;line-height:14px;color:#151515;letter-spacing:0.25px;">0.00</div>
<div class="t" style="left:781.20px;top:885.35px;font-size:14px;line-height:14px;color:#151515;letter-spacing:0.35px;">(777) 777-7777</div>
<div class="t" style="left:947.40px;top:885.35px;font-size:14px;line-height:14px;color:#151515;letter-spacing:0.35px;">(888) 888-8888</div>
<div class="t" style="left:1113.60px;top:885.35px;font-size:14px;line-height:14px;color:#151515;letter-spacing:0.35px;"></div>
<div class="t" style="left:1281.00px;top:885.35px;font-size:14px;line-height:14px;color:#151515;">jennifer@praxipower.com</div>
<div class="a" style="left:404px;top:880.3px;width:26px;height:24.5px;background:#fff;border-style:solid;border-width:1.6px 2px 2.4px 1.6px;border-color:#a9a9a9 #8e8e8e #666666 #a4a4a4;border-radius:1.5px;box-shadow:inset 1.4px 1.4px 0.8px #c2c2c2, inset -2px -1.6px 0.8px #b4b4b4;"></div>
<div class="a" style="left:392px;top:905px;width:1159px;height:26px;background:#dde6f6;"></div>
<div class="t" style="left:111.80px;width:400px;text-align:right;top:911.35px;font-size:14px;line-height:14px;color:#151515;letter-spacing:0.25px;">5196</div>
<div class="t" style="left:522.00px;top:911.35px;font-size:14px;line-height:14px;color:#151515;">Brown, Judy</div>
<div class="t" style="left:373.00px;width:400px;text-align:right;top:911.35px;font-size:14px;line-height:14px;color:#151515;letter-spacing:0.25px;">190.00</div>
<div class="t" style="left:781.20px;top:911.35px;font-size:14px;line-height:14px;color:#151515;letter-spacing:0.35px;"></div>
<div class="t" style="left:947.40px;top:911.35px;font-size:14px;line-height:14px;color:#151515;letter-spacing:0.35px;"></div>
<div class="t" style="left:1113.60px;top:911.35px;font-size:14px;line-height:14px;color:#151515;letter-spacing:0.35px;"></div>
<div class="t" style="left:1281.00px;top:911.35px;font-size:14px;line-height:14px;color:#151515;"></div>
<div class="a" style="left:404px;top:906.3px;width:26px;height:24.5px;background:#fff;border-style:solid;border-width:1.6px 2px 2.4px 1.6px;border-color:#a9a9a9 #8e8e8e #666666 #a4a4a4;border-radius:1.5px;box-shadow:inset 1.4px 1.4px 0.8px #c2c2c2, inset -2px -1.6px 0.8px #b4b4b4;"></div>
<div class="a" style="left:392px;top:931px;width:1159px;height:26px;background:#ffffff;"></div>
<div class="t" style="left:111.80px;width:400px;text-align:right;top:937.35px;font-size:14px;line-height:14px;color:#151515;letter-spacing:0.25px;">5203</div>
<div class="t" style="left:522.00px;top:937.35px;font-size:14px;line-height:14px;color:#151515;">Brown, Tom</div>
<div class="t" style="left:373.00px;width:400px;text-align:right;top:937.35px;font-size:14px;line-height:14px;color:#151515;letter-spacing:0.25px;">0.00</div>
<div class="t" style="left:781.20px;top:937.35px;font-size:14px;line-height:14px;color:#151515;letter-spacing:0.35px;"></div>
<div class="t" style="left:947.40px;top:937.35px;font-size:14px;line-height:14px;color:#151515;letter-spacing:0.35px;">(123) 123-1236</div>
<div class="t" style="left:1113.60px;top:937.35px;font-size:14px;line-height:14px;color:#151515;letter-spacing:0.35px;">(123) 123-1478</div>
<div class="t" style="left:1281.00px;top:937.35px;font-size:14px;line-height:14px;color:#151515;">Tom.brown@somewhere.com</div>
<div class="a" style="left:404px;top:932.3px;width:26px;height:24.5px;background:#fff;border-style:solid;border-width:1.6px 2px 2.4px 1.6px;border-color:#a9a9a9 #8e8e8e #666666 #a4a4a4;border-radius:1.5px;box-shadow:inset 1.4px 1.4px 0.8px #c2c2c2, inset -2px -1.6px 0.8px #b4b4b4;"></div>
<div class="a" style="left:392px;top:957px;width:1159px;height:26px;background:#dde6f6;"></div>
<div class="t" style="left:111.80px;width:400px;text-align:right;top:963.35px;font-size:14px;line-height:14px;color:#151515;letter-spacing:0.25px;">5101</div>
<div class="t" style="left:522.00px;top:963.35px;font-size:14px;line-height:14px;color:#151515;">Burch, Rebecca</div>
<div class="t" style="left:373.00px;width:400px;text-align:right;top:963.35px;font-size:14px;line-height:14px;color:#151515;letter-spacing:0.25px;">95.00</div>
<div class="t" style="left:781.20px;top:963.35px;font-size:14px;line-height:14px;color:#151515;letter-spacing:0.35px;"></div>
<div class="t" style="left:947.40px;top:963.35px;font-size:14px;line-height:14px;color:#151515;letter-spacing:0.35px;"></div>
<div class="t" style="left:1113.60px;top:963.35px;font-size:14px;line-height:14px;color:#151515;letter-spacing:0.35px;"></div>
<div class="t" style="left:1281.00px;top:963.35px;font-size:14px;line-height:14px;color:#151515;"></div>
<div class="a" style="left:404px;top:958.3px;width:26px;height:24.5px;background:#fff;border-style:solid;border-width:1.6px 2px 2.4px 1.6px;border-color:#a9a9a9 #8e8e8e #666666 #a4a4a4;border-radius:1.5px;box-shadow:inset 1.4px 1.4px 0.8px #c2c2c2, inset -2px -1.6px 0.8px #b4b4b4;"></div>
<div class="a" style="left:392px;top:983px;width:1159px;height:26px;background:#ffffff;"></div>
<div class="t" style="left:111.80px;width:400px;text-align:right;top:989.35px;font-size:14px;line-height:14px;color:#151515;letter-spacing:0.25px;">5004</div>
<div class="t" style="left:522.00px;top:989.35px;font-size:14px;line-height:14px;color:#151515;">Caldwell, Billie</div>
<div class="t" style="left:373.00px;width:400px;text-align:right;top:989.35px;font-size:14px;line-height:14px;color:#151515;letter-spacing:0.25px;">100.00</div>
<div class="t" style="left:781.20px;top:989.35px;font-size:14px;line-height:14px;color:#151515;letter-spacing:0.35px;">(555) 444-0101</div>
<div class="t" style="left:947.40px;top:989.35px;font-size:14px;line-height:14px;color:#151515;letter-spacing:0.35px;">(555) 555-5555</div>
<div class="t" style="left:1113.60px;top:989.35px;font-size:14px;line-height:14px;color:#151515;letter-spacing:0.35px;">(555) 000-1234</div>
<div class="t" style="left:1281.00px;top:989.35px;font-size:14px;line-height:14px;color:#151515;">parent@test.com</div>
<div class="a" style="left:404px;top:984.3px;width:26px;height:24.5px;background:#fff;border-style:solid;border-width:1.6px 2px 2.4px 1.6px;border-color:#a9a9a9 #8e8e8e #666666 #a4a4a4;border-radius:1.5px;box-shadow:inset 1.4px 1.4px 0.8px #c2c2c2, inset -2px -1.6px 0.8px #b4b4b4;"></div>
<div class="a" style="left:440px;top:332px;width:1px;height:443px;background:#dfdfdf;"></div>
<div class="a" style="left:440px;top:801px;width:1px;height:196px;background:#dfdfdf;"></div>
<div class="a" style="left:440px;top:775px;width:1px;height:26px;background:rgba(255,255,255,0.18);"></div>
<div class="a" style="left:516px;top:332px;width:1px;height:443px;background:#dfdfdf;"></div>
<div class="a" style="left:516px;top:801px;width:1px;height:196px;background:#dfdfdf;"></div>
<div class="a" style="left:516px;top:775px;width:1px;height:26px;background:rgba(255,255,255,0.18);"></div>
<div class="a" style="left:682px;top:332px;width:1px;height:443px;background:#dfdfdf;"></div>
<div class="a" style="left:682px;top:801px;width:1px;height:196px;background:#dfdfdf;"></div>
<div class="a" style="left:682px;top:775px;width:1px;height:26px;background:rgba(255,255,255,0.18);"></div>
<div class="a" style="left:776px;top:332px;width:1px;height:443px;background:#dfdfdf;"></div>
<div class="a" style="left:776px;top:801px;width:1px;height:196px;background:#dfdfdf;"></div>
<div class="a" style="left:776px;top:775px;width:1px;height:26px;background:rgba(255,255,255,0.18);"></div>
<div class="a" style="left:942px;top:332px;width:1px;height:443px;background:#dfdfdf;"></div>
<div class="a" style="left:942px;top:801px;width:1px;height:196px;background:#dfdfdf;"></div>
<div class="a" style="left:942px;top:775px;width:1px;height:26px;background:rgba(255,255,255,0.18);"></div>
<div class="a" style="left:1108px;top:332px;width:1px;height:443px;background:#dfdfdf;"></div>
<div class="a" style="left:1108px;top:801px;width:1px;height:196px;background:#dfdfdf;"></div>
<div class="a" style="left:1108px;top:775px;width:1px;height:26px;background:rgba(255,255,255,0.18);"></div>
<div class="a" style="left:1274px;top:332px;width:1px;height:443px;background:#dfdfdf;"></div>
<div class="a" style="left:1274px;top:801px;width:1px;height:196px;background:#dfdfdf;"></div>
<div class="a" style="left:1274px;top:775px;width:1px;height:26px;background:rgba(255,255,255,0.18);"></div>
<div class="a" style="left:1480px;top:332px;width:1px;height:443px;background:#dfdfdf;"></div>
<div class="a" style="left:1480px;top:801px;width:1px;height:196px;background:#dfdfdf;"></div>
<div class="a" style="left:1480px;top:775px;width:1px;height:26px;background:rgba(255,255,255,0.18);"></div>
<div class="t" style="left:216.50px;width:400px;text-align:center;top:337.90px;font-size:14px;line-height:14px;color:#1a1a1a;">Tag</div>
<div class="t" style="left:483.00px;top:337.90px;font-size:14px;line-height:14px;color:#1a1a1a;letter-spacing:1.6px;">Id #</div>
<div class="t" style="left:522.00px;top:337.90px;font-size:14px;line-height:14px;color:#1a1a1a;">Last, First</div>
<div class="t" style="left:372.80px;width:400px;text-align:right;top:337.90px;font-size:14px;line-height:14px;color:#1a1a1a;">Cur Bal</div>
<div class="t" style="left:782.80px;top:337.90px;font-size:14px;line-height:14px;color:#1a1a1a;">Phone</div>
<div class="t" style="left:948.20px;top:337.90px;font-size:14px;line-height:14px;color:#1a1a1a;">Cell Phone</div>
<div class="t" style="left:1116.00px;top:337.90px;font-size:14px;line-height:14px;color:#1a1a1a;">Work Phone</div>
<div class="t" style="left:1281.80px;top:337.90px;font-size:14px;line-height:14px;color:#1a1a1a;letter-spacing:0.3px;">Email</div>
<div class="a" style="left:1551px;top:332px;width:21px;height:665px;background:#fafafa;"></div>
<svg class="a" style="left:1554px;top:339px;overflow:visible" width="13" height="10" viewBox="0 0 13 10"><path d="M6.5 1 L12 9.2 L1 9.2 Z" fill="#8f8f8f" stroke="#8f8f8f" stroke-width="1.2" stroke-linejoin="round"/></svg>
<div class="a" style="left:1554.5px;top:355.5px;width:11.5px;height:69.5px;background:#8f8f8f;border-radius:6px;"></div>
<svg class="a" style="left:1554px;top:982px;overflow:visible" width="13" height="10" viewBox="0 0 13 10"><path d="M1 0.8 L12 0.8 L6.5 9 Z" fill="#8f8f8f" stroke="#8f8f8f" stroke-width="1.2" stroke-linejoin="round"/></svg>
</div></div>
<svg class="a" style="left:820px;top:720px;" width="152" height="152" viewBox="0 0 152 152"><circle cx="75.5" cy="75" r="65.5" fill="rgba(250,140,40,0.5)" stroke="#f7913a" stroke-width="6.5"/></svg>
</body></html>
